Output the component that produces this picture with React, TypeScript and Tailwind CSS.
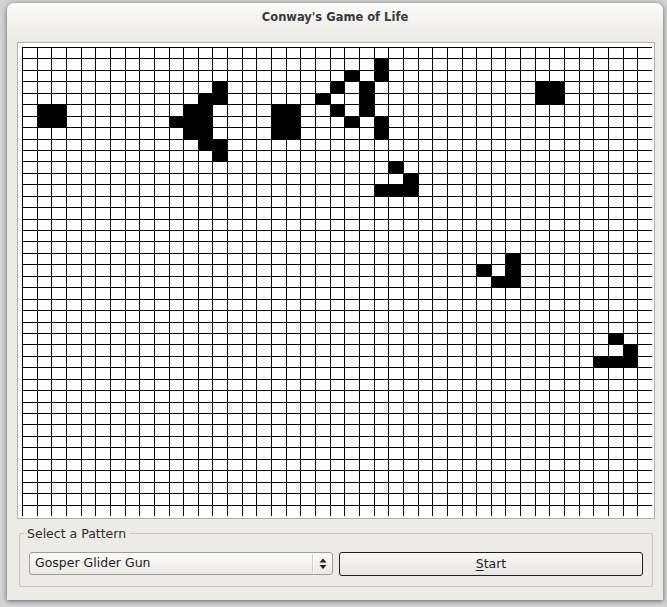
const COLS = 43;
const ROWS = 41;

// live cells as [col, row]
const LIVE: [number, number][] = [
  // left block
  [1, 5], [2, 5], [1, 6], [2, 6],
  // left half of the gun
  [13, 3],
  [12, 4], [13, 4],
  [11, 5], [12, 5],
  [10, 6], [11, 6], [12, 6],
  [11, 7], [12, 7],
  [12, 8], [13, 8],
  [13, 9],
  [17, 5], [18, 5], [17, 6], [18, 6], [17, 7], [18, 7],
  // right half of the gun
  [24, 1], [24, 2],
  [22, 2],
  [21, 3], [23, 3],
  [20, 4], [23, 4],
  [21, 5], [23, 5],
  [22, 6], [24, 6],
  [24, 7],
  // right block
  [35, 3], [36, 3], [35, 4], [36, 4],
  // gliders
  [25, 10], [26, 11], [24, 12], [25, 12], [26, 12],
  [33, 18], [31, 19], [33, 19], [32, 20], [33, 20],
  [40, 25], [41, 26], [39, 27], [40, 27], [41, 27],
];

const alive = new Set(LIVE.map(([c, r]) => `${c},${r}`));

function Board() {
  const cells = [];
  for (let r = 0; r < ROWS; r++) {
    for (let c = 0; c < COLS; c++) {
      const on = alive.has(`${c},${r}`);
      cells.push(
        <div
          key={`${c}-${r}`}
          className={on ? 'border-l border-t border-black bg-black' : 'border-l border-t border-black bg-white'}
        />
      );
    }
  }
  return (
    <div className="grid h-[469px] w-[630px] grid-cols-[repeat(43,minmax(0,1fr))] grid-rows-[repeat(41,minmax(0,1fr))] overflow-hidden">
      {cells}
    </div>
  );
}

function SpinArrows() {
  return (
    <svg width="8" height="12" viewBox="0 0 8 12" className="text-[#1e1e1e]">
      <path d="M4 0.5 L7.5 4.5 L0.5 4.5 Z" fill="currentColor" />
      <path d="M0.5 7 L7.5 7 L4 11 Z" fill="currentColor" />
    </svg>
  );
}

export default function App() {
  return (
    <div className="h-[607px] w-[667px] overflow-hidden bg-[#d3d3d3] pl-[7px] pt-[3px] font-['DejaVu_Sans','Liberation_Sans',sans-serif]">
      <div className="flex h-[597px] w-[656px] flex-col rounded-t-[7px] bg-[linear-gradient(#fbfbfa,#edebe7_36px)] shadow-[0_1px_5px_rgba(0,0,0,0.55)]">
        {/* title bar */}
        <div className="flex h-[30px] items-center justify-center text-[11.5px] font-bold text-[#3a3a3a]">
          Conway's Game of Life
        </div>

        {/* board panel */}
        <div className="ml-[10px] mt-[9px] w-[638px] border border-[#b3b0aa] bg-white pb-[2px] pl-[4px] pr-[2px] pt-[4px]">
          <Board />
        </div>

        {/* controls */}
        <fieldset className="ml-[12px] mt-[7px] w-[634px] min-w-0 rounded-[2px] border border-[#c9c6c0] px-[9px] pb-[10px] pt-[11px]">
          <legend className="-ml-[5px] px-[3px] text-[12.5px] leading-[15px] text-[#2e2e2e]">
            Select a Pattern
          </legend>
          <div className="flex items-start gap-[6px]">
            <div className="flex h-[23px] w-[304px] shrink-0 items-center rounded-[3px] border border-[#a19e98] bg-[linear-gradient(#fbfbfa,#ebe9e5)] pl-[5px] text-[12.5px] text-[#1e1e1e]">
              <span className="flex-1">Gosper Glider Gun</span>
              <span className="h-[17px] w-px bg-[#cfccc6] shadow-[1px_0_0_#ffffff]" />
              <span className="flex w-[19px] items-center justify-center">
                <SpinArrows />
              </span>
            </div>
            <button className="flex h-[24px] w-[304px] shrink-0 items-center justify-center rounded-[3px] border border-[#1f1f1f] bg-[linear-gradient(#f9f8f7,#e8e6e2)] text-[12.5px] text-[#1e1e1e]">
              <span>
                <u className="underline-offset-2">S</u>tart
              </span>
            </button>
          </div>
        </fieldset>
      </div>
    </div>
  );
}
